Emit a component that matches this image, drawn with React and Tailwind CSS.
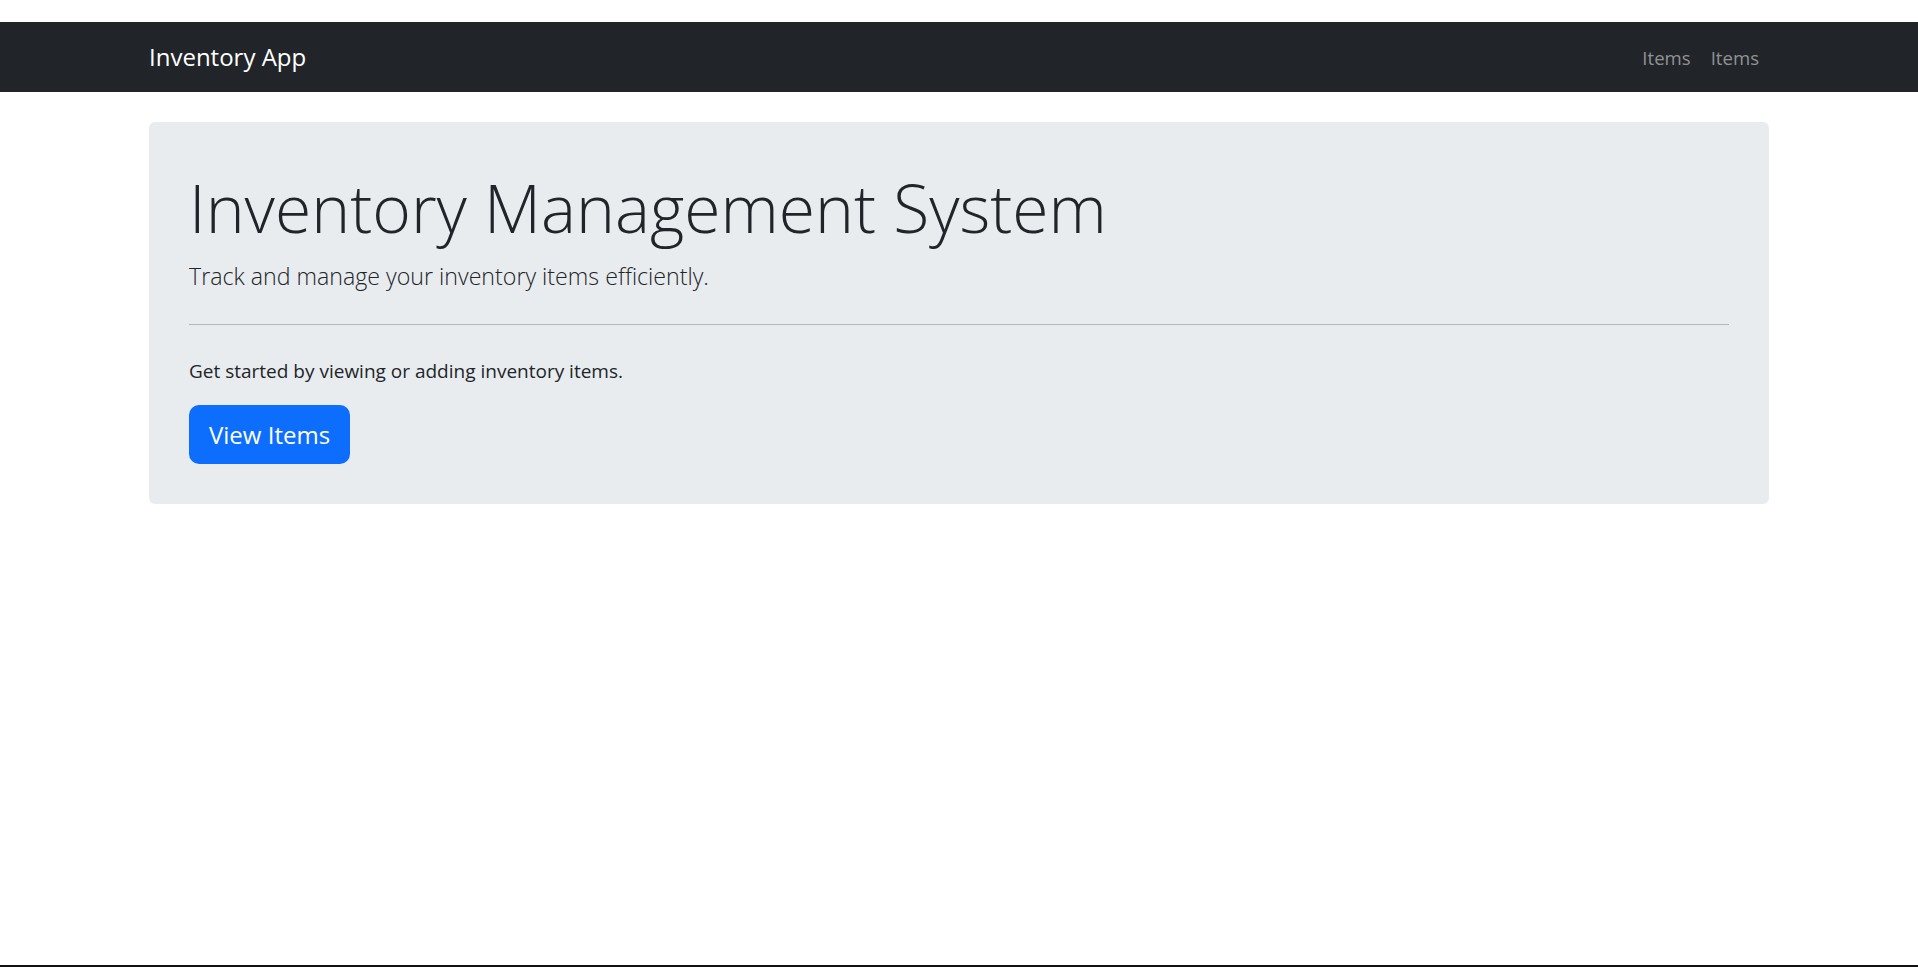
import React from "react";

const font = { fontFamily: '"Open Sans", "Noto Sans", sans-serif' };

const NavBar = () => (
  <nav className="bg-[#212529] py-[10px]">
    <div className="mx-auto flex w-[1620px] items-center justify-between">
      <a href="#" className="py-[6.25px] text-[24px] leading-[37.5px] text-white">
        Inventory App
      </a>
      <div className="flex">
        <a href="#" className="px-[10px] pt-[11px] pb-[9px] text-[18.6px] leading-[30px] text-[#909294]">
          Items
        </a>
        <a href="#" className="px-[10px] pt-[11px] pb-[9px] text-[18.6px] leading-[30px] text-[#909294]">
          Items
        </a>
      </div>
    </div>
  </nav>
);

const Hero = () => (
  <div className="mx-auto mt-[30px] w-[1620px] rounded-[6px] bg-[#e9ecef] p-[40px] text-[#212529]">
    <h1 className="mb-[9px] pt-[3px] text-[66px] font-light leading-[84px]">
      Inventory Management System
    </h1>
    <p className="text-[23.2px] font-light leading-[37.5px]">
      Track and manage your inventory items efficiently.
    </p>
    <hr className="mt-[28px] mb-[31px] border-0 border-t border-[#b5b8bb]" />
    <p className="mb-[19px] text-[19px] leading-[30px]">
      Get started by viewing or adding inventory items.
    </p>
    <a
      href="#"
      className="inline-block rounded-[10px] bg-[#0d6efd] px-[20px] py-[11px] text-[24px] leading-[37.5px] text-white"
    >
      View Items
    </a>
  </div>
);

export default function App() {
  return (
    <div className="flex min-h-screen flex-col border-b-2 border-[#111] bg-white pt-[22px]" style={font}>
      <NavBar />
      <Hero />
    </div>
  );
}
